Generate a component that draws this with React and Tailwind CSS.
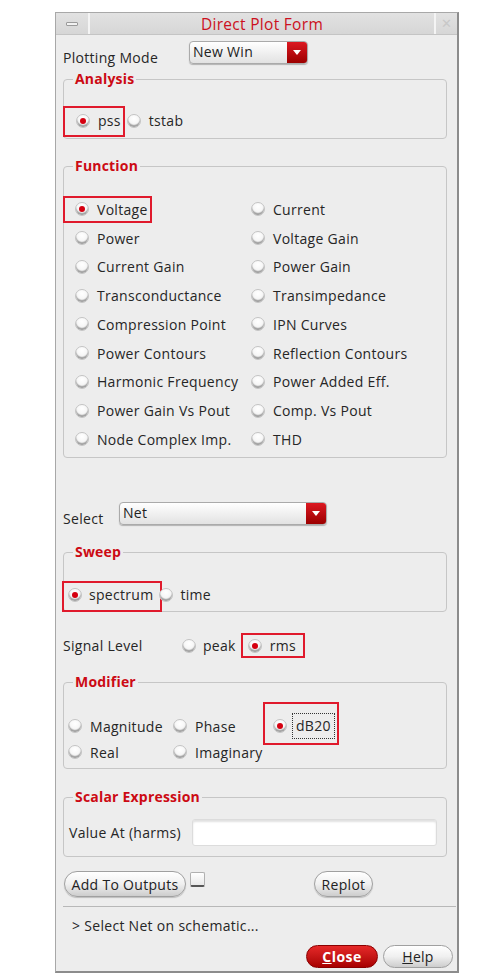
import React from "react";

const font = { fontFamily: '"Open Sans", "Noto Sans", sans-serif' };

function Radio({ on }) {
  return (
    <span className="relative inline-block w-[14px] h-[14px] shrink-0 rounded-full border border-[#c4c4c4] bg-[radial-gradient(circle_at_50%_30%,#ffffff_0%,#f6f6f6_50%,#d0d0d0_85%,#9a9a9a_100%)] shadow-[inset_0_-2px_1px_rgba(0,0,0,0.28)]">
      {on && (
        <span className="absolute left-[3px] top-[3px] w-[6px] h-[6px] rounded-full bg-[#d50010]" />
      )}
    </span>
  );
}

function Opt({ on, label, gap = "gap-[8px]" }) {
  return (
    <span className={`flex items-center ${gap}`}>
      <Radio on={on} />
      <span className="text-[14px] tracking-[0.3px] text-[#262626] leading-[17px] whitespace-nowrap">{label}</span>
    </span>
  );
}

function Group({ title, className, children }) {
  return (
    <fieldset className={`border border-[#c6c6c6] rounded-[4px] ${className}`}>
      <legend className="ml-[9px] px-[2px] text-[14px] leading-[16px] font-bold tracking-[0.2px] text-[#cc0a14]">
        {title}
      </legend>
      {children}
    </fieldset>
  );
}

function Combo({ label, className }) {
  return (
    <div
      className={`flex h-[23px] rounded-[4px] border border-[#aaaaaa] bg-gradient-to-b from-white to-[#e2e2e2] overflow-hidden shadow-[0_1px_1px_rgba(0,0,0,0.25)] ${className}`}
    >
      <span className="flex-1 pl-[3px] text-[14px] tracking-[0.3px] leading-[19px] text-[#222]">{label}</span>
      <span className="w-[20px] flex items-center justify-center bg-gradient-to-b from-[#dc1820] to-[#9c0000]">
        <svg width="8" height="5" viewBox="0 0 8 5">
          <path d="M0 0 L8 0 L4 5 Z" fill="#ffffff" />
        </svg>
      </span>
    </div>
  );
}

function Pill({ children, className }) {
  return (
    <button
      className={`h-[26px] rounded-full border border-[#a0a0a0] bg-gradient-to-b from-white via-[#f0f0f0] to-[#cdcdcd] text-[14px] tracking-[0.3px] text-[#222] shadow-[0_1px_1px_rgba(0,0,0,0.2)] ${className}`}
    >
      {children}
    </button>
  );
}

const functions = [
  ["Voltage", "Current"],
  ["Power", "Voltage Gain"],
  ["Current Gain", "Power Gain"],
  ["Transconductance", "Transimpedance"],
  ["Compression Point", "IPN Curves"],
  ["Power Contours", "Reflection Contours"],
  ["Harmonic Frequency", "Power Added Eff."],
  ["Power Gain Vs Pout", "Comp. Vs Pout"],
  ["Node Complex Imp.", "THD"],
];

export default function App() {
  return (
    <div className="w-[487px] h-[977px] bg-white pt-[12px] pl-[55px]" style={font}>
      <div className="w-[404px] flex flex-col bg-[#ededed] border-t border-l border-[#a8a8a8] border-r-2 border-b-2 border-r-[#8c8c8c] border-b-[#8c8c8c]">
        {/* title bar */}
        <div className="flex h-[22px] bg-gradient-to-b from-[#e2e2e2] to-[#d6d6d6] border-b border-[#c4c4c4]">
          <div className="w-[34px] flex items-center justify-center border-r-2 border-r-[#f4f4f4]">
            <span className="block w-[12px] h-[4px] rounded-[1px] border border-[#9a9a9a] bg-[#f2f2f2]" />
          </div>
          <div className="flex-1 text-center text-[15.5px] tracking-[0.3px] leading-[22px] text-[#cc1020]">
            Direct Plot Form
          </div>
          <div className="w-[23px] flex items-center justify-center border-l-2 border-l-[#f4f4f4] text-[13px] text-[#c8c8c8]">
            ✕
          </div>
        </div>

        <div className="flex flex-col pl-[7px] pr-[10px]">
          {/* plotting mode */}
          <div className="flex items-start mt-[6px] h-[23px]">
            <span className="w-[126px] mt-[8px] text-[14px] tracking-[0.3px] leading-[17px] text-[#262626]">Plotting Mode</span>
            <Combo label="New Win" className="w-[119px]" />
          </div>

          <Group title="Analysis" className="mt-[7px] h-[68px]">
            <div className="relative flex items-center gap-[6px] mt-[19px] h-[31px] pb-[2px] pl-[12px]">
              <span className="absolute left-[-1px] top-0 w-[62px] h-[31px] border-2 border-[#e01a2c]" />
              <Opt on label="pss" />
              <Opt label="tstab" />
            </div>
          </Group>

          <Group title="Function" className="mt-[19px] h-[300px]">
            <div className="grid grid-cols-[176px_1fr] auto-rows-[28.75px] mt-[21px] pl-[11px]">
              {functions.map(([a, b], i) => (
                <React.Fragment key={a}>
                  <div className="relative flex items-center">
                    {i === 0 && (
                      <span className="absolute left-[-12px] top-[1px] w-[89px] h-[27px] border-2 border-[#e01a2c]" />
                    )}
                    <Opt on={i === 0} label={a} />
                  </div>
                  <div className="flex items-center">
                    <Opt label={b} />
                  </div>
                </React.Fragment>
              ))}
            </div>
          </Group>

          {/* select */}
          <div className="flex items-start mt-[44px] h-[23px]">
            <span className="w-[56px] mt-[8px] text-[14px] tracking-[0.3px] leading-[17px] text-[#262626]">Select</span>
            <Combo label="Net" className="w-[208px]" />
          </div>

          <Group title="Sweep" className="mt-[19px] h-[68px]">
            <div className="relative flex items-center gap-[6px] mt-[21px] h-[31px] pb-[4px] pl-[4px]">
              <span className="absolute left-[-2px] top-0 w-[100px] h-[31px] border-2 border-[#e01a2c]" />
              <Opt on label="spectrum" gap="gap-[7px]" />
              <Opt label="time" gap="gap-[7px]" />
            </div>
          </Group>

          {/* signal level */}
          <div className="flex items-center mt-[21px] h-[25px]">
            <span className="w-[119px] text-[14px] tracking-[0.3px] leading-[17px] text-[#262626]">Signal Level</span>
            <Opt label="peak" gap="gap-[7px]" />
            <span className="relative flex items-center ml-[12px] h-[25px]">
              <span className="absolute left-[-7px] top-0 w-[64px] h-[25px] border-2 border-[#e01a2c]" />
              <Opt on label="rms" gap="gap-[8px]" />
            </span>
          </div>

          <Group title="Modifier" className="mt-[16px] h-[95px]">
            <div className="grid grid-cols-[105px_100px_1fr] auto-rows-[26px] mt-[23px] pl-[4px]">
              <div className="flex items-center">
                <Opt label="Magnitude" />
              </div>
              <div className="flex items-center">
                <Opt label="Phase" />
              </div>
              <div className="relative flex items-center">
                <span className="absolute left-[-10px] top-[-11px] w-[76px] h-[43px] border-2 border-[#e01a2c]" />
                <span className="flex items-center gap-[5px]">
                  <Radio on />
                  <span className="px-[3px] border border-dotted border-[#333] text-[14px] tracking-[0.3px] leading-[24px] text-[#262626]">
                    dB20
                  </span>
                </span>
              </div>
              <div className="flex items-center">
                <Opt label="Real" />
              </div>
              <div className="flex items-center">
                <Opt label="Imaginary" />
              </div>
            </div>
          </Group>

          <Group title="Scalar Expression" className="mt-[20px] h-[68px]">
            <div className="flex items-center mt-[14px] h-[27px] pl-[5px]">
              <span className="w-[123px] text-[14px] tracking-[0.3px] leading-[17px] text-[#262626]">Value At (harms)</span>
              <span className="w-[245px] h-[27px] rounded-[3px] bg-white border border-[#dcdcdc] shadow-[inset_0_2px_2px_rgba(0,0,0,0.12)]" />
            </div>
          </Group>

          {/* buttons */}
          <div className="flex items-start mt-[14px] h-[26px] pl-[1px]">
            <Pill className="w-[122px]">Add To Outputs</Pill>
            <span className="ml-[4px] mt-[1px] w-[15px] h-[15px] rounded-[2px] border border-[#b0b0b0] border-b-2 border-b-[#555] bg-gradient-to-b from-white to-[#e8e8e8]" />
            <Pill className="ml-[109px] w-[59px]">Replot</Pill>
          </div>
        </div>

        <div className="ml-[7px] mr-[1px] mt-[9px] h-[1px] bg-[#b8b8b8]" />

        <div className="mt-[10px] pl-[16px] h-[17px] text-[14px] tracking-[0.3px] leading-[17px] text-[#262626]">
          &gt; Select Net on schematic...
        </div>

        <div className="flex justify-end gap-[5px] mt-[11px] mb-[3px] pr-[4px]">
          <button className="w-[72px] h-[23px] rounded-full border border-[#8a0000] bg-gradient-to-b from-[#e62828] to-[#a80000] text-white font-bold text-[14px] leading-[20px] tracking-[0.5px]">
            <span className="underline">C</span>lose
          </button>
          <button className="w-[70px] h-[23px] rounded-full border border-[#a0a0a0] bg-gradient-to-b from-white via-[#f0f0f0] to-[#cdcdcd] text-[#222] text-[14px] tracking-[0.3px] leading-[20px]">
            <span className="underline">H</span>elp
          </button>
        </div>
      </div>
    </div>
  );
}
